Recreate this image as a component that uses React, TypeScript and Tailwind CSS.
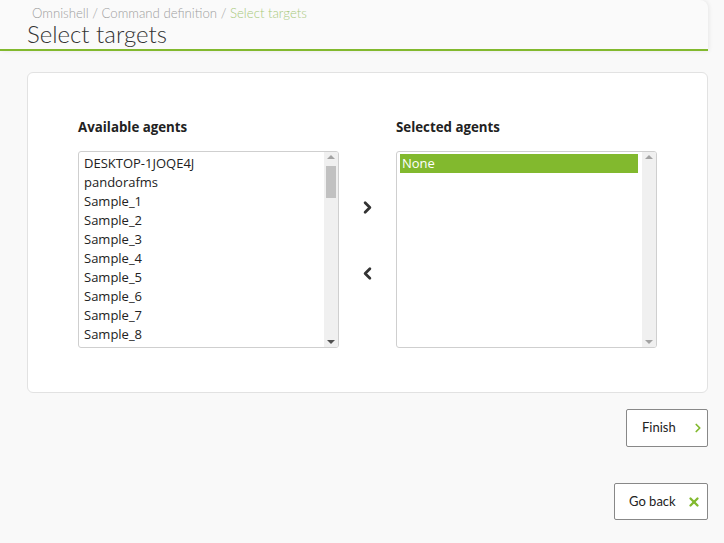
import { ChevronLeft, ChevronRight, X } from 'lucide-react'

const AGENTS = [
  'DESKTOP-1JOQE4J',
  'pandorafms',
  'Sample_1',
  'Sample_2',
  'Sample_3',
  'Sample_4',
  'Sample_5',
  'Sample_6',
  'Sample_7',
  'Sample_8',
]

function FakeScrollbar({ thumb }: { thumb: boolean }) {
  return (
    <div className="w-[14px] bg-[#f0f0f0] flex flex-col items-center py-[3px] shrink-0">
      <div className="w-0 h-0 border-l-[4px] border-r-[4px] border-b-[4px] border-l-transparent border-r-transparent border-b-[#a3a3a3]" />
      {thumb && <div className="w-[10px] h-[32px] bg-[#c1c1c1] mt-[7px]" />}
      <div className="flex-1" />
      <div className={`w-0 h-0 border-l-[4px] border-r-[4px] border-t-[4px] border-l-transparent border-r-transparent ${thumb ? 'border-t-[#505050]' : 'border-t-[#a3a3a3]'}`} />
    </div>
  )
}

function AgentList({ items, selected }: { items: string[]; selected?: boolean }) {
  return (
    <div className="w-[261px] h-[197px] border border-[#cfcfcf] rounded-[3px] bg-white flex overflow-hidden">
      <div className="flex-1 overflow-hidden pt-[2px] pl-[3px] pr-[4px]">
        {items.map((item) => (
          <div
            key={item}
            className={`h-[19px] leading-[19px] text-[13px] px-[2px] ${selected ? 'bg-[#82b92e] text-white' : 'text-[#222]'}`}
          >
            {item}
          </div>
        ))}
      </div>
      <FakeScrollbar thumb={!selected} />
    </div>
  )
}

export default function App() {
  return (
    <div className="w-[724px] h-[543px] bg-[#f9f9f9] overflow-hidden" style={{ fontFamily: 'Lato, "Open Sans", sans-serif' }}>
      <div className="w-[708px] h-[51px] bg-[#fafafa] rounded-tr-[8px] shadow-[1px_0_4px_rgba(0,0,0,0.08)] border-b-2 border-[#82b92e] pl-[27px] pt-[5px]">
        <div className="text-[13.2px] text-[#a0a0a0] pl-[5px] leading-[16px] font-light">
          Omnishell / Command definition / <span className="text-[#a8c97a]">Select targets</span>
        </div>
        <div className="text-[24px] font-light text-[#333] leading-[26px]">Select targets</div>
      </div>

      <div className="ml-[27px] mt-[21px] w-[681px] h-[321px] bg-white border border-[#e2e2e2] rounded-[6px] pt-[45px] pl-[50px]" style={{ fontFamily: '"Open Sans", sans-serif' }}>
        <div className="flex">
          <div>
            <div className="text-[13.3px] font-bold text-[#222] leading-[18px] mb-[15px]">Available agents</div>
            <AgentList items={AGENTS} />
          </div>
          <div className="w-[57px] flex flex-col items-center pt-[80px] gap-[47px]">
            <ChevronRight size={19} strokeWidth={3.5} className="text-[#333]" />
            <ChevronLeft size={19} strokeWidth={3.5} className="text-[#333]" />
          </div>
          <div>
            <div className="text-[13.3px] font-bold text-[#222] leading-[18px] mb-[15px]">Selected agents</div>
            <AgentList items={['None']} selected />
          </div>
        </div>
      </div>

      <div className="w-[708px] flex flex-col items-end mt-[16px] gap-[36px]">
        <button className="w-[82px] h-[38px] bg-white border border-[#888] rounded-[2px] flex items-center text-[13px] text-[#222] pl-[15px] gap-[15px]">
          Finish
          <ChevronRight size={14} strokeWidth={3} className="text-[#82b92e]" />
        </button>
        <button className="w-[94px] h-[37px] bg-white border border-[#888] rounded-[2px] flex items-center text-[13px] text-[#222] pl-[14px] gap-[11px]">
          Go back
          <X size={14} strokeWidth={4} className="text-[#82b92e]" />
        </button>
      </div>
    </div>
  )
}
